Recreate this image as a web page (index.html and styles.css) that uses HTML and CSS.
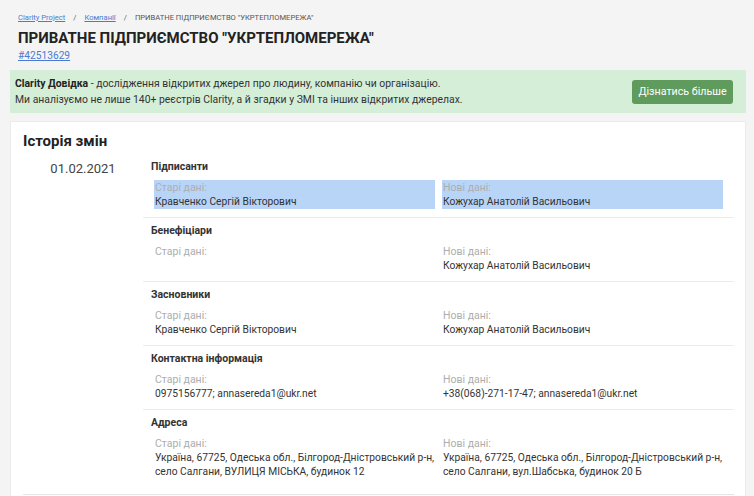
FILE: index.html
```html
<!DOCTYPE html>
<html lang="uk">
<head>
<meta charset="utf-8">
<title>ПРИВАТНЕ ПІДПРИЄМСТВО "УКРТЕПЛОМЕРЕЖА"</title>
<link rel="stylesheet" href="styles.css">
</head>
<body>
<div class="page">
  <div class="head">
    <div class="crumbs">
      <a href="#" class="crumb-link">Clarity Project</a>
      <span class="sep">/</span>
      <a href="#" class="crumb-link">Компанії</a>
      <span class="sep">/</span>
      <span class="crumb-cur">ПРИВАТНЕ ПІДПРИЄМСТВО "УКРТЕПЛОМЕРЕЖА"</span>
    </div>
    <h1 class="title">ПРИВАТНЕ ПІДПРИЄМСТВО "УКРТЕПЛОМЕРЕЖА"</h1>
    <a href="#" class="code">#42513629</a>
  </div>

  <div class="banner">
    <div class="banner-text">
      <div><b>Clarity Довідка</b> - дослідження відкритих джерел про людину, компанію чи організацію.</div>
      <div>Ми аналізуємо не лише 140+ реєстрів Clarity, а й згадки у ЗМІ та інших відкритих джерелах.</div>
    </div>
    <a href="#" class="btn">Дізнатись більше</a>
  </div>

  <div class="card">
    <h2 class="card-title">Історія змін</h2>
    <div class="group">
      <div class="date">01.02.2021</div>
      <div class="changes">
        <div class="row">
          <div class="row-head">Підписанти</div>
          <div class="cols">
            <div class="cell hl"><div class="lbl">Старі дані:</div><div class="val">Кравченко Сергій Вікторович</div></div>
            <div class="cell hl"><div class="lbl">Нові дані:</div><div class="val">Кожухар Анатолій Васильович</div></div>
          </div>
        </div>
        <div class="row">
          <div class="row-head">Бенефіціари</div>
          <div class="cols">
            <div class="cell"><div class="lbl">Старі дані:</div></div>
            <div class="cell"><div class="lbl">Нові дані:</div><div class="val">Кожухар Анатолій Васильович</div></div>
          </div>
        </div>
        <div class="row">
          <div class="row-head">Засновники</div>
          <div class="cols">
            <div class="cell"><div class="lbl">Старі дані:</div><div class="val">Кравченко Сергій Вікторович</div></div>
            <div class="cell"><div class="lbl">Нові дані:</div><div class="val">Кожухар Анатолій Васильович</div></div>
          </div>
        </div>
        <div class="row">
          <div class="row-head">Контактна інформація</div>
          <div class="cols">
            <div class="cell"><div class="lbl">Старі дані:</div><div class="val">0975156777; annasereda1@ukr.net</div></div>
            <div class="cell"><div class="lbl">Нові дані:</div><div class="val">+38(068)-271-17-47; annasereda1@ukr.net</div></div>
          </div>
        </div>
        <div class="row">
          <div class="row-head">Адреса</div>
          <div class="cols">
            <div class="cell"><div class="lbl">Старі дані:</div><div class="val">Україна, 67725, Одеська обл., Білгород-Дністровський р-н, село Салгани, ВУЛИЦЯ МІСЬКА, будинок 12</div></div>
            <div class="cell"><div class="lbl">Нові дані:</div><div class="val">Україна, 67725, Одеська обл., Білгород-Дністровський р-н, село Салгани, вул.Шабська, будинок 20 Б</div></div>
          </div>
        </div>
      </div>
    </div>
  </div>
</div>
</body>
</html>
```

FILE: styles.css
```css
html, body {
  margin: 0;
  padding: 0;
}
body {
  background: #f4f4f4;
  font-family: Roboto, "Noto Sans", "Liberation Sans", sans-serif;
  color: #333;
}
.page {
  padding: 11px 8px 0 10px;
}
.head {
  padding-left: 8px;
}
.crumbs {
  font-size: 7.6px;
  line-height: 14px;
  color: #555;
  display: flex;
  gap: 8px;
}
.crumb-link {
  color: #4a7bd0;
  text-decoration: underline;
}
.sep {
  color: #555;
}
.title {
  margin: 3px 0 0;
  font-size: 15px;
  line-height: 21px;
  font-weight: 700;
  color: #222;
}
.code {
  display: block;
  font-size: 10.2px;
  line-height: 14px;
  color: #4a7bd0;
  text-decoration: underline;
  width: max-content;
}
.banner {
  margin-top: 7px;
  height: 43px;
  background: #d5eed8;
  display: flex;
  align-items: center;
  justify-content: space-between;
  padding: 0 13px 0 5px;
  box-sizing: border-box;
}
.banner-text {
  font-size: 10.4px;
  line-height: 16px;
  color: #333;
}
.banner-text b {
  color: #222;
}
.btn {
  display: flex;
  align-items: center;
  justify-content: center;
  width: 101px;
  height: 24px;
  background: #5f9b5c;
  color: #fff;
  font-size: 10.7px;
  text-decoration: none;
  border-radius: 3px;
}
.card {
  margin-top: 8px;
  background: #fff;
  border: 1px solid #ebebeb;
  border-bottom: none;
  padding: 9px 11px 0 12px;
  min-height: 380px;
}
.card-title {
  margin: 0 0 1px;
  font-size: 15px;
  line-height: 20px;
  font-weight: 700;
  color: #222;
}
.group {
  display: flex;
  padding: 2px 0 7px;
  border-bottom: 1px solid #e6e6e6;
}
.date {
  width: 120px;
  flex: none;
  text-align: center;
  font-size: 13px;
  line-height: 18px;
  padding-top: 6px;
  color: #444;
}
.changes {
  flex: 1;
}
.row {
  padding: 6px 0 8px;
  border-top: 1px solid #ececec;
}
.row:first-child {
  border-top: none;
  padding-top: 6px;
}
.row-head {
  padding-left: 8px;
  font-size: 10.5px;
  line-height: 14px;
  font-weight: 700;
  color: #333;
  margin-bottom: 6px;
}
.cols {
  display: grid;
  grid-template-columns: 1fr 1fr;
  column-gap: 7px;
  padding: 0 11px;
}
.cell {
  padding-left: 1px;
}
.hl {
  background: #b8d5f8;
}
.lbl {
  font-size: 10.5px;
  line-height: 15px;
  color: #adadad;
}
.val {
  font-size: 10.25px;
  line-height: 14px;
  color: #333;
}
```
